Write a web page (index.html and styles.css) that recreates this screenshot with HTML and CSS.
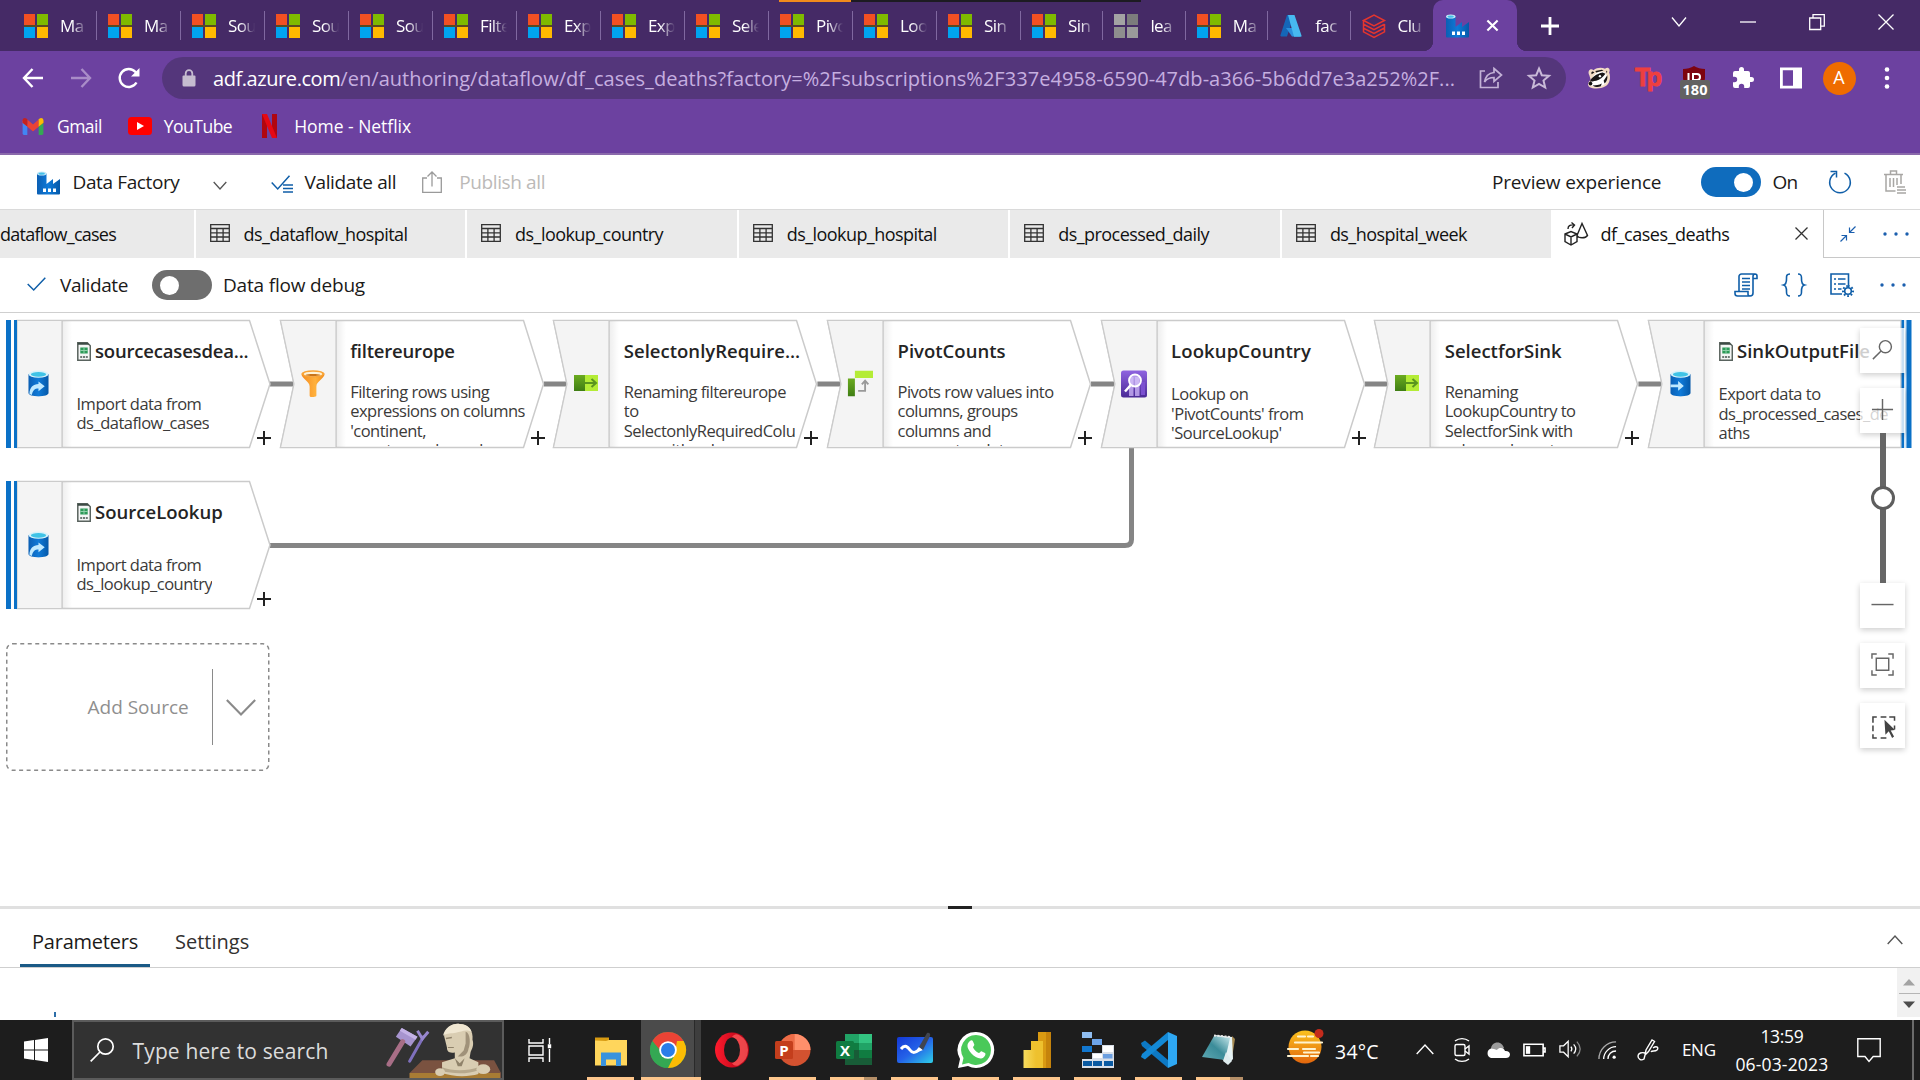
FILE: index.html
```html
<!DOCTYPE html>
<html lang="en">
<head>
<meta charset="utf-8">
<title>df_cases_deaths - Azure Data Factory</title>
<link rel="stylesheet" href="styles.css">
</head>
<body>
<svg class="defs" aria-hidden="true">
  <defs>
    <linearGradient id="gBlue" x1="0" x2="1" y1="0" y2="0"><stop offset="0" stop-color="#0b5fb4"/><stop offset=".5" stop-color="#0f7ad8"/><stop offset="1" stop-color="#0558a8"/></linearGradient>
    <linearGradient id="gFunnel" x1="0" x2="1" y1="0" y2="0"><stop offset="0" stop-color="#f58b1f"/><stop offset=".6" stop-color="#ffb13d"/><stop offset="1" stop-color="#ef8a1c"/></linearGradient>
    <linearGradient id="gGreen" x1="0" x2="0" y1="0" y2="1"><stop offset="0" stop-color="#6bab1f"/><stop offset="1" stop-color="#3f7d14"/></linearGradient>
    <linearGradient id="gPurple" x1="0" x2="0" y1="0" y2="1"><stop offset="0" stop-color="#8f63e0"/><stop offset="1" stop-color="#4a2a96"/></linearGradient>
    <linearGradient id="gBoard" x1="0" x2="1" y1="0" y2="1"><stop offset="0" stop-color="#1338d6"/><stop offset=".5" stop-color="#2462e8"/><stop offset="1" stop-color="#2fd0e8"/></linearGradient>
    <linearGradient id="gOpera" x1="0" x2="1" y1="0" y2="0"><stop offset="0" stop-color="#ff1b2d"/><stop offset="1" stop-color="#a70014"/></linearGradient>
    <linearGradient id="gSun" x1="0" x2="0" y1="0" y2="1"><stop offset="0" stop-color="#fbc21e"/><stop offset="1" stop-color="#e2660d"/></linearGradient>
    <linearGradient id="gBar" x1="0" x2="1" y1="0" y2="0"><stop offset="0" stop-color="#f7dc5e"/><stop offset="1" stop-color="#eec12e"/></linearGradient>
    <linearGradient id="gNote" x1="0" x2="1" y1="1" y2="0"><stop offset="0" stop-color="#5fa9b4"/><stop offset=".5" stop-color="#3b8c99"/><stop offset="1" stop-color="#c9e8ec"/></linearGradient>
    <linearGradient id="gFade" x1="0" x2="1" y1="0" y2="0"><stop offset="0" stop-color="#000" stop-opacity=".07"/><stop offset="1" stop-color="#000" stop-opacity="0"/></linearGradient>

    <symbol id="ms" viewBox="0 0 24 24"><path fill="#5a4a20" d="M0 11h24v2H0z"/><path fill="#f25022" d="M0 0h11v11H0z"/><path fill="#7fba00" d="M13 0h11v11H13z"/><path fill="#00a4ef" d="M0 13h11v11H0z"/><path fill="#ffb900" d="M13 13h11v11H13z"/></symbol>
    <symbol id="ms-grey" viewBox="0 0 24 24"><path fill="#a3a3a3" d="M0 0h11v11H0z"/><path fill="#7c7c7c" d="M13 0h11v11H13z"/><path fill="#8e8e8e" d="M0 13h11v11H0z"/><path fill="#9a9a9a" d="M13 13h11v11H13z"/></symbol>
    <symbol id="factory" viewBox="0 0 24 24"><path fill="url(#gBlue)" d="M1 2.5h9.500V13l6.500-5v5l7-5v14.500a1 1 0 0 1-1 1H2a1 1 0 0 1-1-1z"/><ellipse cx="5.750" cy="2.500" rx="4.750" ry="2" fill="#c8e9f8"/><ellipse cx="5.750" cy="2.700" rx="3.200" ry="1.100" fill="#45bfe8"/><path fill="#fff" d="M7 17.500h3v3.500H7zM12 17.500h3v3.500h-3zM17 17.500h3v3.500h-3z"/></symbol>
    <symbol id="table" viewBox="0 0 20 18"><path fill="none" stroke="#333" stroke-width="1.300" d="M.7.7h18.600v16.600H.7zM.7 4.500h18.600M.7 8.800h18.600M.7 13h18.600M6.900 4.500v12.800M13.100 4.500v12.800"/></symbol>
    <symbol id="csv" viewBox="0 0 14 19"><path fill="#f4f6f5" stroke="#59635e" stroke-width="1.500" d="M.8.8h9.500l3 3v14.400H.8z"/><path fill="#3c4a44" d="M.8.8h9.500l2 2H.8z"/><path fill="#2c9a58" d="M3.300 5.500h7.400v6H3.300z"/><path stroke="#8ed0a8" d="M7 5.500v6M3.300 8.500h7.400"/><path stroke="#6e7a75" stroke-width="2" stroke-dasharray="2 .8" d="M3.200 15h8"/></symbol>
    <symbol id="cyl" viewBox="0 0 22 28"><path fill="url(#gBlue)" d="M.5 4v20c0 2 4.700 3.500 10.500 3.500s10.500-1.500 10.500-3.500V4z"/><ellipse cx="11" cy="4.200" rx="10.500" ry="3.700" fill="#d5f1fa"/><ellipse cx="11" cy="4.400" rx="8" ry="2.400" fill="#3fc3e6"/></symbol>
    <symbol id="i-source" viewBox="0 0 22 28"><use href="#cyl"/><path fill="#bfe9ff" d="M1.500 25c0-7 4-10.500 9.500-10.500V12l6.500 5-6.500 5v-2.800c-4 0-6 2-7 6.800z"/></symbol>
    <symbol id="i-sink" viewBox="0 0 22 28"><use href="#cyl"/><path fill="#bfe9ff" d="M.5 15h8v-3.500l6 5-6 5V18h-8z"/></symbol>
    <symbol id="i-filter" viewBox="0 0 26 28"><path fill="url(#gFunnel)" d="M1 4c0 5 8.500 8 8.500 13v9.500c0 1.200 1 1.500 2 1.500h2c1.800 0 3-.500 3-1.500V17C16.500 12 25 9 25 4z"/><ellipse cx="13" cy="4" rx="12" ry="3.700" fill="#f9a437"/><ellipse cx="13" cy="4.100" rx="9.500" ry="2.400" fill="#fff3d8"/><path fill="#c8741a" d="M5 5.200c3-1.500 13-1.500 16 0-3 1.600-13 1.600-16 0z"/></symbol>
    <symbol id="i-select" viewBox="0 0 26 18"><path fill="#b4ec36" d="M11 1h14v16H11z"/><path fill="url(#gGreen)" d="M1 1h11v16H1z"/><path fill="none" stroke="#5a9420" stroke-width="2" d="M12 9h11M18.500 5l4.500 4-4.500 4"/></symbol>
    <symbol id="i-pivot" viewBox="0 0 28 28"><path fill="#b4ec36" d="M8.500 0H28v8H8.500z"/><path fill="url(#gGreen)" d="M1 8.500h7.500V28H1z"/><path fill="none" stroke="#999" stroke-width="2" d="M12 22h7.500V12M16 15l3.500-4 3.500 4"/></symbol>
    <symbol id="i-lookup" viewBox="0 0 28 28"><rect x="1" y=".5" width="26" height="27" rx="2.500" fill="url(#gPurple)"/><path fill="#c9b1f5" d="M9 7h4.500v19H9zM15 7h4.500v19H15z" opacity=".8"/><path fill="#7b50d0" d="M21 12h4v13h-4z"/><circle cx="15" cy="10.500" r="6" fill="#d9c8fa" fill-opacity=".6" stroke="#fff" stroke-width="1.800"/><path stroke="#fff" stroke-width="2.500" d="M10.800 15 5 21.500"/></symbol>
  </defs>
</svg>

<header class="browser">
  <div class="strip-mark"></div>
  <div class="tabs">
    <div class="tab"><svg><use href="#ms"/></svg><span>Ma</span></div>
    <div class="tab"><svg><use href="#ms"/></svg><span>Ma</span></div>
    <div class="tab"><svg><use href="#ms"/></svg><span>Sou</span></div>
    <div class="tab"><svg><use href="#ms"/></svg><span>Sou</span></div>
    <div class="tab"><svg><use href="#ms"/></svg><span>Sou</span></div>
    <div class="tab"><svg><use href="#ms"/></svg><span>Filte</span></div>
    <div class="tab"><svg><use href="#ms"/></svg><span>Exp</span></div>
    <div class="tab"><svg><use href="#ms"/></svg><span>Exp</span></div>
    <div class="tab"><svg><use href="#ms"/></svg><span>Sele</span></div>
    <div class="tab"><svg><use href="#ms"/></svg><span>Pivo</span></div>
    <div class="tab"><svg><use href="#ms"/></svg><span>Loo</span></div>
    <div class="tab"><svg><use href="#ms"/></svg><span>Sin</span></div>
    <div class="tab tab-s"><svg><use href="#ms"/></svg><span>Sin</span></div>
    <div class="tab tab-s"><svg><use href="#ms-grey"/></svg><span>lea</span></div>
    <div class="tab tab-s"><svg><use href="#ms"/></svg><span>Ma</span></div>
    <div class="tab tab-s"><svg viewBox="0 0 24 24"><path fill="#1566b8" d="M8 1h7L8 22.500H2.500a1 1 0 0 1-1-1.500z"/><path fill="#2b8fdc" d="M7 14h10l4 8.500H13z"/><path fill="#47b9f0" d="M9 1h6.500l7 20.500a1 1 0 0 1-1 1.300H15z"/></svg><span>fac</span></div>
    <div class="tab tab-s tab-last"><svg viewBox="0 0 24 24" fill="none" stroke="#e5352e" stroke-width="1.500"><path d="M1.500 6.500 12 1l10.500 5.500L12 12z"/><path d="M1.500 6.500v3.700L12 15.700l10.500-5.500M1.500 10.200v4L12 19.500l10.500-5.500v-4M1.500 14.200v3.600L12 23.300l10.500-5.500v-4"/></svg><span>Clu</span></div>
    <div class="tab-active"><svg class="i24" viewBox="0 0 24 24"><use href="#factory"/></svg><svg class="i14" viewBox="0 0 14 14"><path stroke="#fff" stroke-width="2.300" d="m1.500 1.500 11 11m0-11-11 11"/></svg></div>
    <svg class="new-tab" viewBox="0 0 18 18"><path stroke="#fff" stroke-width="2.800" d="M9 0v18M0 9h18"/></svg>
    <div class="win">
      <svg viewBox="0 0 16 16"><path d="m1 3.500 7 8.500 7-8.500"/></svg>
      <svg viewBox="0 0 16 16"><path d="M0 8h16"/></svg>
      <svg viewBox="0 0 16 16"><path d="M.7 4h11v11.500h-11zM4 4V.7h11.300v11.500H12"/></svg>
      <svg viewBox="0 0 16 16"><path d="m.5.5 15 15m0-15-15 15"/></svg>
    </div>
  </div>
  <div class="nav">
    <div class="nav-btns">
      <svg viewBox="0 0 22 22" stroke="#fff"><path d="M21 11H2M10.500 2 2 11l8.500 9"/></svg>
      <svg viewBox="0 0 22 22" stroke="#a98cc8"><path d="M1 11h19M11.500 2 20 11l-8.500 9"/></svg>
      <svg viewBox="0 0 22 22" stroke="#fff"><path d="M18.500 15.500A9 9 0 1 1 17.500 5l2 2"/><path fill="#fff" stroke="none" d="M21.500 1v8.500H13z"/></svg>
    </div>
    <div class="url">
      <svg class="lock" viewBox="0 0 14 18"><path fill="#c5bccf" d="M1.500 6.500h11a1 1 0 0 1 1 1V16a1.500 1.500 0 0 1-1.500 1.500H2A1.500 1.500 0 0 1 .5 16V7.500a1 1 0 0 1 1-1z"/><path fill="none" stroke="#c5bccf" stroke-width="1.800" d="M3.700 7V4.500a3.300 3.300 0 0 1 6.600 0V7"/></svg>
      <span class="addr"><b>adf.azure.com</b><i>/en/authoring/dataflow/df_cases_deaths?factory=%2Fsubscriptions%2F337e4958-6590-47db-a366-5b6dd7e3a252%2F...</i></span>
      <svg class="i24" viewBox="0 0 24 24" fill="none" stroke="#c3b2d6" stroke-width="1.700"><path d="M6 5H1.500v16.500H19V16"/><path d="M15 2.500 22.500 9 15 15.500v-4c-4.500 0-7 1-9.500 4.500C6.500 10.500 9.500 7 15 6.500z"/></svg>
      <svg class="i24 star" viewBox="0 0 24 24" fill="none" stroke="#c9bad8" stroke-width="2"><path d="m12 2.500 2.800 6.700 7.200.6-5.500 4.700 1.700 7L12 17.800l-6.200 3.700 1.700-7L2 9.800l7.200-.6z"/></svg>
    </div>
    <div class="ext">
      <svg viewBox="0 0 26 24"><path fill="#f3dcc6" d="M2.500 9C0 4 4 1 7 3.500c4-3 9-3 12.500-1.500 3-3 6.500 0 4.500 4 2 5 1 12-4 15-5 3-13 3-17 1-3-2-2-5 1-8z"/><path fill="#fff" d="M4 17C6 10 9 5 17 5c5 1 6 9 3 13-4 4-11 4-16 2z"/><path fill="#1a1718" d="M3 16c2-5 7-8.500 14-10l3 1.500c-3 4-6 6.500-10 7.500-3 .5-5 1-7 1zM5 8c-1-3 1-4 3-2zM20.500 4l1.500 1-.5 2zM9 4.500 16 3l2 1-8 2zM22 9c.5 4-.5 7-3 9l-1-3zM6 20c4 0 7 0 10-2l-1 3c-3 1-6 1-9-1z"/><circle cx="14" cy="10" r="1.300" fill="#fff"/><circle cx="3.800" cy="18" r="2" fill="#111"/></svg>
      <div class="tp">Tp</div>
      <div class="ub"><svg viewBox="0 0 22 22"><path fill="#7d0410" d="M11 0c3 2 7 3 11 3v9c0 4-4 8-11 10C4 20 0 16 0 12V3c4 0 8-1 11-3z"/><path fill="none" stroke="#fff" stroke-width="2" d="M5.500 7v9M10 16V8h4a3 3 0 0 1 0 6h-3"/></svg><span>180</span></div>
      <svg viewBox="0 0 24 24"><path fill="#fff" d="M20.500 11H19V7a2 2 0 0 0-2-2h-4V3.500a2.500 2.500 0 0 0-5 0V5H4a2 2 0 0 0-2 2v3.800h1.500a2.700 2.700 0 0 1 0 5.400H2V20a2 2 0 0 0 2 2h3.800v-1.500a2.700 2.700 0 0 1 5.400 0V22H17a2 2 0 0 0 2-2v-4h1.500a2.500 2.500 0 0 0 0-5z"/></svg>
      <svg viewBox="0 0 24 24"><path fill="none" stroke="#fff" stroke-width="2.800" d="M2.400 2.900h19.200v18.200H2.400z"/><path fill="#fff" d="M14 3h7v18h-7z"/></svg>
      <div class="avatar">A</div>
      <svg viewBox="0 0 24 24" fill="#fff"><circle cx="12" cy="3.500" r="2.300"/><circle cx="12" cy="12" r="2.300"/><circle cx="12" cy="20.500" r="2.300"/></svg>
    </div>
  </div>
  <div class="marks">
    <svg class="gm" viewBox="0 0 22 18"><path fill="#4285f4" d="M0 3v13.500A1.500 1.500 0 0 0 1.500 18H5V6z"/><path fill="#34a853" d="M22 3v13.500a1.500 1.500 0 0 1-1.500 1.500H17V6z"/><path fill="#ea4335" d="m0 2.500 11 9.500 11-9.500V5l-5 4-6 5-6-5-5-4z"/><path fill="#ea4335" d="M5 1.500V9l6 5 6-5V1.500L11 7z"/><path fill="#c5221f" d="M0 2.500C0 .3 2.500-.6 4 .6l1 1V9L0 5z"/><path fill="#fbbc04" d="M22 2.500C22 .3 19.500-.6 18 .6l-1 1V9l5-4z"/></svg>
    <span>Gmail</span>
    <svg class="yt" viewBox="0 0 24 18"><rect width="24" height="18" rx="3.500" fill="#f00"/><path fill="#fff" d="m9 5 7 4-7 4z"/></svg>
    <span>YouTube</span>
    <svg class="nf" viewBox="0 0 15 24"><path fill="#b1060f" d="M0 0h5v24H0zM10 0h5v24h-5z"/><path fill="#e50914" d="M0 0h5l10 24h-5z"/></svg>
    <span class="m3">Home - Netflix</span>
  </div>
</header>

<main class="adf">
  <div class="topbar">
    <svg class="i24 fac" viewBox="0 0 24 24"><use href="#factory"/></svg>
    <span class="t-df">Data Factory</span>
    <svg class="chev" viewBox="0 0 14 9"><path fill="none" stroke="#555" stroke-width="1.300" d="m.7 1 6.300 7 6.300-7"/></svg>
    <svg class="val" viewBox="0 0 22 18" fill="none" stroke="#0f5ea8" stroke-width="1.500"><path d="m.7 7.500 6 6.500L18.500.7M12 10h10M12 13.500h10M12 17h10"/></svg>
    <span class="t-va">Validate all</span>
    <svg class="pub" viewBox="0 0 20 22" fill="none" stroke="#9a9a9a" stroke-width="1.300"><path d="M5 7H.7v14.300h18.600V7H15M10 15.500V1M5.500 5.500 10 1l4.500 4.500"/></svg>
    <span class="t-pa">Publish all</span>
    <span class="t-pe">Preview experience</span>
    <span class="toggle on"></span>
    <span class="t-on">On</span>
    <svg class="i24 rf" viewBox="0 0 24 24" fill="none" stroke="#0f5ea8" stroke-width="1.500"><path d="M16.500 3.200A10.300 10.300 0 1 1 7.500 3.200"/><path d="M2.500 1.500h6v6"/></svg>
    <svg class="i24 tr" viewBox="0 0 24 24" fill="none" stroke="#a8a6a4" stroke-width="1.500"><path d="M1 4.500h19M7.500 4.500V1h6v3.500M3 4.500V21h9.500M18 4.500V14M7 8v9M10.500 8v9M14 8v7M14 17h8M14 20h9M14 23h9"/></svg>
  </div>
  <div class="doctabs">
    <div class="doc doc-first"><span>dataflow_cases</span></div>
    <div class="doc"><svg><use href="#table"/></svg><span>ds_dataflow_hospital</span></div>
    <div class="doc"><svg><use href="#table"/></svg><span>ds_lookup_country</span></div>
    <div class="doc"><svg><use href="#table"/></svg><span>ds_lookup_hospital</span></div>
    <div class="doc"><svg><use href="#table"/></svg><span>ds_processed_daily</span></div>
    <div class="doc"><svg><use href="#table"/></svg><span>ds_hospital_week</span></div>
    <div class="doc-on">
      <svg class="i24" viewBox="0 0 24 24" fill="none" stroke="#222" stroke-width="1.400"><path d="m1 12 6-2.500 6 2.500v7.500L7 23l-6-3.500zM1 12l6 3 6-3M7 15v8M18 1.500l-5 12c1.500 3 8.500 3 10.500 0zM4 7c0-3 2-4.500 6-4M7.500.500 10.500 3 8 6"/></svg>
      <span>df_cases_deaths</span>
      <svg class="dx" viewBox="0 0 13 13"><path stroke="#333" stroke-width="1.300" d="m.5.5 12 12m0-12-12 12"/></svg>
    </div>
    <div class="doc-tools">
      <svg class="shr" viewBox="0 0 16 16" fill="none" stroke="#1b5fae" stroke-width="1.200"><path d="M15.500.5 9.500 6.500M9.500 1.500v5h5M.5 15.500l6-6M1.500 9.500h5v5"/></svg>
      <svg class="dots" viewBox="0 0 26 4" fill="#1b5fae"><circle cx="2" cy="2" r="1.700"/><circle cx="13" cy="2" r="1.700"/><circle cx="24" cy="2" r="1.700"/></svg>
    </div>
  </div>
  <div class="flowbar">
    <svg class="ck" viewBox="0 0 19 14"><path fill="none" stroke="#0f5ea8" stroke-width="1.500" d="m.7 7 6 6L18.300.7"/></svg>
    <span class="t-vd">Validate</span>
    <span class="toggle off"></span>
    <span class="t-dd">Data flow debug</span>
    <svg class="i24 f1" viewBox="0 0 24 24" fill="none" stroke="#0f5ea8" stroke-width="1.600"><path d="M5 18V3.500A2.500 2.500 0 0 1 7.500 1H21a2 2 0 0 1 2 2v2.500h-4M19 3.500V20a3 3 0 0 1-3 3H3.500A2.500 2.500 0 0 1 1 20.500V18.500h13V20.500a2 2 0 0 0 2 2.500M19 3.500A2.500 2.500 0 0 1 21 1M8 5.500h8M8 9h8M8 12.500h8M8 16h8"/></svg>
    <svg class="i24 f2" viewBox="0 0 24 24" fill="none" stroke="#0f5ea8" stroke-width="1.600"><path d="M8 1C4.500 1 4.500 3 4.500 5s.5 6-3 7c3.500 1 3 5 3 7s0 4 3.500 4M16 1c3.500 0 3.500 2 3.500 4s-.5 6 3 7c-3.500 1-3 5-3 7s0 4-3.500 4"/></svg>
    <svg class="i24 f3" viewBox="0 0 24 24" fill="none" stroke="#0f5ea8" stroke-width="1.600"><path d="M12 21H1V1h17.500v11M4 6h2M8 6h7.500M4 11h2M8 11h7.500M4 16h2M8 16h3.500"/><circle cx="18" cy="18" r="3.300"/><path stroke-dasharray="1.700 1.900" stroke-width="2" d="M18 13a5 5 0 1 1 0 10 5 5 0 0 1 0-10"/></svg>
    <svg class="dots f4" viewBox="0 0 26 4" fill="#1b5fae"><circle cx="2" cy="2" r="1.700"/><circle cx="13" cy="2" r="1.700"/><circle cx="24" cy="2" r="1.700"/></svg>
  </div>

  <section class="canvas">
    <svg class="wires" viewBox="0 0 1920 593" fill="none" stroke="#858585" stroke-width="5"><path d="M270 71h25M543.700 71h25M817.400 71h25M1091 71h25M1364.700 71h25M1638.400 71h25M270 232.500h855q6.500 0 6.500-6V134"/></svg>

    <article class="node src a">
      <svg class="shape" viewBox="0 0 266 128"><path class="body" d="M11 .5h232.500l20.500 63.500-20.500 63.500H11z"/><path class="side" d="M11 .5h45v127H11z"/><path fill="url(#gFade)" d="M56 1h10v126H56z"/><path class="blue" d="M0 0h5v128H0zM8 0h3v128H8z"/></svg>
      <svg class="ico" viewBox="0 0 22 28"><use href="#i-source"/></svg>
      <h3 class="tight"><svg class="csv"><use href="#csv"/></svg><span>sourcecasesdea...</span></h3>
      <p class="p2">Import data from<br>ds_dataflow_cases</p><i class="plus"></i>
    </article>
    <article class="node b">
      <svg class="shape" viewBox="0 0 266 128"><path class="body" d="M.5.500h243l20 63.500-20 63.500H.5L14 64z"/><path class="side" d="M.5.500H56v127H.5L14 64z"/><path fill="url(#gFade)" d="M56 1h10v126H56z"/></svg>
      <svg class="ico w26" viewBox="0 0 26 28"><use href="#i-filter"/></svg>
      <h3 class="tight"><span>filtereurope</span></h3>
      <p>Filtering rows using<br>expressions on columns<br>'continent,<br>country_code, and</p><i class="plus"></i>
    </article>
    <article class="node c">
      <svg class="shape" viewBox="0 0 266 128"><path class="body" d="M.5.500h243l20 63.500-20 63.500H.5L14 64z"/><path class="side" d="M.5.500H56v127H.5L14 64z"/><path fill="url(#gFade)" d="M56 1h10v126H56z"/></svg>
      <svg class="ico w26 h18" viewBox="0 0 26 18"><use href="#i-select"/></svg>
      <h3><span>SelectonlyRequire...</span></h3>
      <p>Renaming filtereurope<br>to<br>SelectonlyRequiredColu<br>mns with columns</p><i class="plus"></i>
    </article>
    <article class="node d">
      <svg class="shape" viewBox="0 0 266 128"><path class="body" d="M.5.500h243l20 63.500-20 63.500H.5L14 64z"/><path class="side" d="M.5.500H56v127H.5L14 64z"/><path fill="url(#gFade)" d="M56 1h10v126H56z"/></svg>
      <svg class="ico w26" viewBox="0 0 28 28"><use href="#i-pivot"/></svg>
      <h3><span>PivotCounts</span></h3>
      <p>Pivots row values into<br>columns, groups<br>columns and<br>aggregates data</p><i class="plus"></i>
    </article>
    <article class="node e">
      <svg class="shape" viewBox="0 0 266 128"><path class="body" d="M.5.500h243l20 63.500-20 63.500H.5L14 64z"/><path class="side" d="M.5.500H56v127H.5L14 64z"/><path fill="url(#gFade)" d="M56 1h10v126H56z"/></svg>
      <svg class="ico w28" viewBox="0 0 28 28"><use href="#i-lookup"/></svg>
      <h3 class="wide"><span>LookupCountry</span></h3>
      <p class="p3">Lookup on<br>'PivotCounts' from<br>'SourceLookup'</p><i class="plus"></i>
    </article>
    <article class="node f">
      <svg class="shape" viewBox="0 0 266 128"><path class="body" d="M.5.500h243l20 63.500-20 63.500H.5L14 64z"/><path class="side" d="M.5.500H56v127H.5L14 64z"/><path fill="url(#gFade)" d="M56 1h10v126H56z"/></svg>
      <svg class="ico w26 h18" viewBox="0 0 26 18"><use href="#i-select"/></svg>
      <h3><span>SelectforSink</span></h3>
      <p>Renaming<br>LookupCountry to<br>SelectforSink with<br>columns 'country</p><i class="plus"></i>
    </article>
    <article class="node g">
      <svg class="shape" viewBox="0 0 266 128"><path class="body" d="M.5.500H253v127H.5L14 64z"/><path class="side" d="M.5.500H56v127H.5L14 64z"/><path fill="url(#gFade)" d="M56 1h10v126H56z"/><path fill="#d3e7f7" d="M256 0h3v128h-3z"/><path class="blue" d="M253.500 0h2.500v128h-2.500zM258.500 0h5v128h-5z"/></svg>
      <svg class="ico" viewBox="0 0 22 28"><use href="#i-sink"/></svg>
      <h3><svg class="csv"><use href="#csv"/></svg><span>SinkOutputFile</span></h3>
      <p class="p3">Export data to<br>ds_processed_cases_de<br>aths</p>
    </article>
    <article class="node src h">
      <svg class="shape" viewBox="0 0 266 128"><path class="body" d="M11 .5h232.500l20.500 63.500-20.500 63.500H11z"/><path class="side" d="M11 .5h45v127H11z"/><path fill="url(#gFade)" d="M56 1h10v126H56z"/><path class="blue" d="M0 0h5v128H0zM8 0h3v128H8z"/></svg>
      <svg class="ico" viewBox="0 0 22 28"><use href="#i-source"/></svg>
      <h3><svg class="csv"><use href="#csv"/></svg><span>SourceLookup</span></h3>
      <p class="p2">Import data from<br>ds_lookup_country</p><i class="plus"></i>
    </article>

    <div class="add">
      <svg class="dash" viewBox="0 0 264 128"><rect x=".75" y=".75" width="262" height="126.500" rx="6" fill="none" stroke="#8a8a8a" stroke-width="1.500" stroke-dasharray="4 3.500"/></svg>
      <span>Add Source</span><i></i>
      <svg class="addc" viewBox="0 0 32 18"><path fill="none" stroke="#8a8a8a" stroke-width="2.200" d="m1 1 15 15.500L31 1"/></svg>
    </div>

    <div class="zoom">
      <div class="zb"><svg viewBox="0 0 24 24"><circle cx="15" cy="8" r="6.300"/><path d="M10.500 12.500 2 21"/></svg></div>
      <div class="zb zplus"><svg viewBox="0 0 24 24"><path d="M12 0v22M1 11h22"/></svg></div>
      <div class="track"><i></i></div>
      <div class="zb"><svg viewBox="0 0 24 24"><path d="M.5 11h23"/></svg></div>
      <div class="zb zgap"><svg viewBox="0 0 24 24"><path d="M5.500 4.500h13v12.500h-13zM1 5V0h5M18 0h5v5M1 17v5h5M18 22h5v-5"/></svg></div>
      <div class="zb zgap"><svg viewBox="0 0 24 24" class="sel"><path d="M1 7V1h4M9 1h6M18 1h5.500v4M1 10v6M1 19v4h4M9 23h6M23.500 10v4"/><path fill="#444" stroke="none" d="m13 4 11 10.500-4.500.5 3.500 6.500-2 1.500-3.500-7L14 19.500z"/></svg></div>
    </div>
  </section>

  <section class="panel">
    <div class="split"><i></i></div>
    <div class="ptabs"><span class="pt on-tab">Parameters</span><span class="pt">Settings</span><svg class="up" viewBox="0 0 16 10"><path fill="none" stroke="#555" stroke-width="1.400" d="m.7 9 7.300-8 7.300 8"/></svg></div>
    <div class="pbody"><i class="sliver"></i>
      <div class="scroll"><svg viewBox="0 0 12 7"><path fill="#a3a3a3" d="M0 6.500 6 0l6 6.500z"/></svg><hr><svg viewBox="0 0 12 7"><path fill="#4c4c4c" d="m0 .5 6 6.500 6-6.500z"/></svg></div>
    </div>
  </section>
</main>

<footer class="task">
  <div class="start"><svg class="i24" viewBox="0 0 24 24"><path fill="#fff" d="m0 3.500 10-1.400v9.500H0zM11 2l13-2v11.500H11zM0 12.600h10V22L0 20.600zM11 12.600h13V24l-13-1.900z"/></svg></div>
  <div class="search">
    <svg class="i24" viewBox="0 0 24 24" fill="none" stroke="#fff" stroke-width="1.700"><circle cx="15.500" cy="8.500" r="7.700"/><path d="M10 14 .7 23.300"/></svg>
    <span>Type here to search</span>
    <svg class="bust" viewBox="0 0 116 57"><path fill="#7a5240" d="M36 39h73l7 13v5H23v-5z"/><path fill="#a87c34" d="M23 52h92v5H23z"/><path fill="#a794cf" d="m15 6 16 9-7 10-15-10z"/><path fill="#c4b2e6" d="m15 6 16 9-2 3-16-9z"/><path stroke="#a86e86" stroke-width="5" stroke-linecap="round" d="m16 20-14 23"/><path stroke="#7f70bd" stroke-width="3" stroke-linecap="round" d="m37 15-14 25"/><path fill="none" stroke="#9887cf" stroke-width="3" d="m31 9 5 8 6-7"/><path fill="#d9cdb2" d="M58 14c2-9 9-13 16-12 9 0 14 7 13 16 2 6-1 10-2 13l-1 6 9 4v12c-10 3-26 3-37-1V41l13-4v-6c-6 1-8-1-8-5l-1-4z"/><path fill="#a0927a" d="M80 10c5 1 5 13 3 17-1 7-6 9-11 8l6-6 2-7z"/><path fill="#f0e7d2" d="M57 14c2-9 10-13 17-12 7 0 11 4 12 8-6-3-10 0-16 1-4 1-9 0-13 3z"/><path fill="#8f826a" d="m60 16 6-1v1.500l-6 1zM62 25.500h6v1h-6zM69 37l5 5 5-5-3 8h-4z"/><path fill="#b6a88c" d="M56 46c10 4 26 4 37 0v3c-9 4-26 4-37 1z"/><ellipse cx="54" cy="51" rx="5" ry="4" fill="#d9cdb2"/><ellipse cx="98" cy="48" rx="7" ry="5" fill="#d9cdb2"/></svg>
  </div>
  <div class="tv"><svg viewBox="0 0 24 24" fill="none" stroke="#fff" stroke-width="1.400"><path d="M1 1v4h14V1M1 8h14v9H1zM1 24v-4h14v4M21.500 0v6M21.500 11v13"/><path fill="#fff" d="M20.500 7h2v2.500h-2z"/></svg></div>
  <div class="apps">
    <div class="app run"><svg viewBox="0 0 36 36"><path fill="#d89b12" d="M2 5.500h14v5H2z"/><path fill="#ffd65c" d="M2 8.500 13 9l3-1h18v25.500H2z"/><path fill="#3a93dd" d="M8 20.500h20V34h-5v-6.500H13V34H8z"/></svg></div>
    <div class="app run chrome"><svg viewBox="0 0 36 36"><circle cx="18" cy="18" r="18" fill="#34a853"/><path fill="#ea4335" d="M2.400 9A18 18 0 0 1 33.600 9L26 18 10 18z"/><path fill="#fbbc05" d="M33.600 9A18 18 0 0 1 18 36l6.500-13L27 9z"/><path fill="#34a853" d="M2.400 9 10 22l8 5-2.500 8.800A18 18 0 0 1 2.400 9z"/><circle cx="18" cy="18" r="8.800" fill="#fff"/><circle cx="18" cy="18" r="7" fill="#2a7de9"/></svg></div>
    <div class="app"><svg viewBox="0 0 36 36"><ellipse cx="18" cy="18" rx="17" ry="17.500" fill="url(#gOpera)"/><path fill="#ff5b5b" d="M25 3a17 17 0 0 1 0 30c-3 2-6 0-7-2 4-1 7-7 7-13s-3-12-7-13c1-2 4-4 7-2z" opacity=".75"/><ellipse cx="18" cy="18" rx="8" ry="12.500" fill="#1d1d1d"/></svg></div>
    <div class="app run"><svg viewBox="0 0 36 36"><circle cx="19.500" cy="18" r="16" fill="#d35230"/><path fill="#ed6c47" d="M19.500 2v16h-16a16 16 0 0 1 16-16z"/><path fill="#ff8f6b" d="M19.500 2a16 16 0 0 1 16 16h-16z"/><rect x="0" y="9" width="18" height="18" rx="1.500" fill="#c43e1c"/><text x="9" y="23.500" class="ltr">P</text></svg></div>
    <div class="app run multi"><svg viewBox="0 0 36 36"><path fill="#21a366" d="M9 2h27v9H9z"/><path fill="#33c481" d="M23 2h13v9H23z"/><path fill="#107c41" d="M9 11h27v7H9z"/><path fill="#21a366" d="M23 11h13v7H23z"/><path fill="#185c37" d="M9 18h27v15H9z"/><path fill="#107c41" d="M23 18h13v8H23z"/><rect x="0" y="9" width="18" height="18" rx="1.500" fill="#107c41"/><text x="9" y="23.500" class="ltr">X</text></svg></div>
    <div class="app run"><svg viewBox="0 0 36 36"><rect x="0" y="5" width="36" height="26" rx="2" fill="url(#gBoard)"/><path fill="none" stroke="#fff" stroke-width="3" d="M4 17c4-5 7-2 9 1s6 4 10-2"/><path fill="#fff" d="m22 15 4 3-5 2z"/><path fill="#41454f" d="M30 1c2-1 4 1 3 3l-7 14-4-3z"/></svg></div>
    <div class="app run"><svg viewBox="0 0 36 36"><path fill="#fff" d="M18 0a18 18 0 1 1-8 34L0 36l2-9A18 18 0 0 1 18 0z"/><path fill="#4ac959" d="M18 3a15 15 0 1 1-7.500 28L4 32.500 5.500 26A15 15 0 0 1 18 3z"/><path fill="#fff" d="M12 9c1-1 2.500-.8 3 .5l1.300 3c.3 1-1.300 2-1.300 2.800 1 2.500 3 4.500 5.800 5.800 1 0 1.800-2 2.700-1.800l3.500 1.700c1.300 1-.5 4.500-3 5.300C18 28 8.500 18 9.500 13c.3-1.700 1.300-3 2.500-4z"/></svg></div>
    <div class="app run"><svg viewBox="0 0 36 36"><path fill="#d99a12" d="M19 0h13v36H19z"/><path fill="#b87409" d="M27 0h5v36h-5z" opacity=".6"/><path fill="#eec12e" d="M12 9h12v27H12z"/><path fill="url(#gBar)" d="M4.500 18H17v18H4.500z"/></svg></div>
    <div class="app run"><svg viewBox="0 0 36 36"><path fill="#8fbdf0" d="M2 0h10v6H2z"/><path fill="#6da5ea" d="M12 7h10v6H12z"/><path fill="#1277cf" d="M2 14h10v6H2z"/><path fill="#d9dfe8" d="M22 13h12v23H2v-9h10v-6h10z"/><path fill="#fff" d="M23 14h10v6H23zM13 22h9v4h-9z"/><path fill="#6c9fe0" d="M23 22h9.500v4.500H23z"/><path fill="#0a5aa2" d="M3 29h9v5H3zM13 29h9v5h-9zM24 29h9v5h-9z"/></svg></div>
    <div class="app run"><svg viewBox="0 0 36 36"><path fill="#0d79c4" d="M0 11 4 8.500l23 19.500v8L1 14z"/><path fill="#1389d6" d="M0 25 4 27.500 27 8V0L1 22z"/><path fill="#2ea7f2" d="m27 0 9 4v28l-9 4z"/></svg></div>
    <div class="app run multi"><svg viewBox="0 0 36 36"><path fill="#a68a52" d="m30 4 3 3-3 19z"/><path fill="#e6f3f5" d="m14 3 16 2 1 22-4 4-9-5z"/><path fill="url(#gNote)" d="M12 4 28 6l-5 22L0 25z"/><path fill="none" stroke="#e8e8e8" stroke-width="2" stroke-dasharray="2 1.500" d="m12 3.500 17 1.500"/><path fill="#dfecee" d="m24 20 6 9-4 4-5-4z"/></svg></div>
  </div>
  <div class="tray">
    <svg class="sun" viewBox="0 0 38 38"><circle cx="19" cy="19" r="16.500" fill="url(#gSun)"/><path stroke="#fff3cf" stroke-width="2.200" stroke-linecap="round" d="M12 8.500h7M22 8.500h5M9 14.500h27M2 21h10M17 21h12M2 28h20M25 28h7M18 24.500h15"/><circle cx="33" cy="5.500" r="4.500" fill="#c42b1c"/></svg>
    <span class="tp34">34°C</span>
    <svg class="t1" viewBox="0 0 18 11"><path d="m.7 10 8.300-9 8.300 9"/></svg>
    <svg class="t2" viewBox="0 0 18 24"><path d="M2 3C6-.2 12-.2 16 3M2 21c4 3.200 10 3.200 14 0"/><rect x="2" y="6.500" width="10" height="11" rx="1.500"/><path d="m12 11 4-3v8l-4-3"/></svg>
    <svg class="t3" viewBox="0 0 24 16"><path fill="#9b9b9b" stroke="none" d="M5 7c0-4 3-6.500 6.500-6.500C15 .500 17 3 18 6l-8 6z"/><path fill="#fff" stroke="none" d="M5 16a5 5 0 0 1 0-9.500c2 0 4 .5 6 1.500 2-3 7-2.500 8 1 3-.3 5 1 5 3.500S22 16 20 16z"/></svg>
    <svg class="t4" viewBox="0 0 24 14"><path stroke-width="1.700" d="M1 1h20v12H1zM21.500 5H23v4h-1.500"/><path fill="#fff" stroke="none" d="M3 3h4.500v8H3z"/></svg>
    <svg class="t5" viewBox="0 0 24 20"><path d="M1 6.500h4l5-5v17l-5-5H1zM13 7.500c1.200 1.500 1.200 3.500 0 5M16 5c2.700 3 2.700 7 0 10"/><path stroke="#888" d="M19.500 2c4.500 5 4.500 11 0 16"/></svg>
    <svg class="t6" viewBox="0 0 20 20"><path stroke="#aaa" d="M1 19C1 9 9 1 19 1"/><path d="M6 19C6 12 12 6 19 6M10.500 19c0-5 3.500-8.500 8.500-8.500"/><circle cx="17" cy="17" r="1.700" fill="#fff" stroke="none"/></svg>
    <svg class="t7" viewBox="0 0 22 22"><path d="m8 16 1-5 6-10 2.500 1.500-6 10L8 16l-1 4c-3 2-6 0-6-3s4-4 7-3M16 9c4-3 6 0 4 2s-5 0-6 2"/></svg>
    <span class="eng">ENG</span>
    <div class="clock"><span>13:59</span><span>06-03-2023</span></div>
    <svg class="t8" viewBox="0 0 24 25"><path d="M.8.800h22.400v17.700h-7L12 23.500l-4-5H.8z"/></svg>
    <i class="peek"></i>
  </div>
</footer>
</body>
</html>
```
FILE: styles.css
```css
* { box-sizing: border-box; }
body { margin: 0; width: 1920px; height: 1080px; overflow: hidden; background: #fff; color: #1b1a19; font: 19px/1.2 "Open Sans", "Noto Sans", sans-serif; display: flex; flex-direction: column; }
svg { display: block; flex: none; overflow: visible; }
span, b, i { white-space: nowrap; flex: none; }
b, i { font-weight: 400; font-style: normal; }
.defs { position: absolute; width: 0; height: 0; }
.i24 { width: 24px; height: 24px; }

/* Browser chrome */
.browser { position: relative; height: 155px; flex: none; background: #6c41a0; border-bottom: 2px solid #8a69ab; }
.strip-mark { position: absolute; left: 779px; top: 0; width: 362px; height: 2px; background: linear-gradient(90deg, #f28a1c 72px, #1d1b22 72px); }
.tabs { height: 51px; background: #452a66; display: flex; align-items: center; padding-left: 13px; color: #fff; font-size: 17px; }
.tab { width: 84px; height: 29px; border-right: 1px solid #8068a0; display: flex; align-items: center; padding-left: 11px; gap: 12px; }
.tab svg { width: 24px; height: 24px; }
.tab span { width: 27px; overflow: hidden; padding-top: 1px; letter-spacing: -.6px; -webkit-mask-image: linear-gradient(90deg, #000 45%, transparent); mask-image: linear-gradient(90deg, #000 45%, transparent); }
.tab-s { width: 82.4px; }
.tab-last { border-right-color: transparent; }
.tab-active { position: relative; width: 84px; height: 51px; background: #6c41a0; border-radius: 10px 10px 0 0; display: flex; align-items: center; padding-left: 12px; gap: 17px; }
.tab-active::before, .tab-active::after { content: ""; position: absolute; bottom: 0; width: 10px; height: 10px; }
.tab-active::before { left: -10px; background: radial-gradient(circle at 0 0, transparent 10px, #6c41a0 10.5px); }
.tab-active::after { right: -10px; background: radial-gradient(circle at 100% 0, transparent 10px, #6c41a0 10.5px); }
.i14 { width: 13px; height: 13px; }
.new-tab { width: 18px; height: 18px; margin-left: 24px; }
.win { margin-left: auto; display: flex; gap: 53px; padding-right: 26px; margin-bottom: 8px; }
.win svg { width: 16px; height: 16px; fill: none; stroke: #fff; stroke-width: 1.3; }
.nav { height: 54px; display: flex; align-items: center; }
.nav-btns { display: flex; gap: 26px; width: 162px; padding-left: 22px; fill: none; stroke-width: 2.4; }
.nav-btns svg { width: 22px; height: 22px; }
.url { width: 1404px; height: 42px; border-radius: 21px; background: #54367b; display: flex; align-items: center; padding: 0 15px 0 20px; }
.lock { width: 14px; height: 18px; margin-right: 17px; }
.addr { font-size: 20px; color: #c6afe0; width: 1242px; margin-right: 24px; padding-top: 1px; }
.addr b { color: #fff; letter-spacing: -.0214em; }
.addr i { letter-spacing: .0019em; }
.star { margin-left: 24px; }
.ext { display: flex; align-items: center; margin-left: 21px; gap: 24px; }
.ext > svg { width: 24px; height: 24px; }
.tp { width: 24px; height: 28px; color: #ee3f3f; font: 700 25px/26px "Liberation Sans", sans-serif; letter-spacing: -3.5px; -webkit-text-stroke: 1px #ee3f3f; }
.ub { position: relative; width: 24px; height: 24px; }
.ub svg { width: 22px; height: 22px; }
.ub span { position: absolute; left: -3px; top: 14px; width: 30px; height: 19px; border-radius: 2px; background: #626262; color: #fff; font: 700 14.5px/20px "Open Sans", sans-serif; text-align: center; }
.avatar { width: 33px; height: 33px; margin: 0 -4.5px; border-radius: 50%; background: #ef6c00; color: #fff; font-size: 18px; display: flex; align-items: center; justify-content: center; }
.marks { height: 42px; display: flex; align-items: center; color: #fff; font-size: 17.5px; padding-left: 22px; letter-spacing: -.03em; }
.m3 { letter-spacing: -.0013em; }
.gm { width: 22px; height: 17px; margin-right: 13px; }
.yt { width: 24px; height: 18px; margin: 0 12px 0 26px; }
.nf { width: 15px; height: 24px; margin: 0 17px 0 30px; }

/* Factory header */
.adf { height: 865px; flex: none; display: flex; flex-direction: column; }
.topbar { height: 55px; border-bottom: 1px solid #dadada; display: flex; align-items: center; padding-left: 36px; flex: none; letter-spacing: -.02em; }
.topbar > span:not(.toggle) { padding-top: 1px; }
.t-df { margin: 0 33px 0 12.5px; }
.fac { margin-top: 2px; }
.chev { width: 14px; height: 9px; margin: 6px 44px 0 0; }
.val { width: 22px; height: 18px; margin-right: 12px; margin-top: 4px; }
.t-va { margin-right: 26px; }
.pub { width: 20px; height: 22px; margin-right: 17px; }
.t-pa { color: #bcbab8; }
.t-pe { margin-left: auto; font-weight: 500; letter-spacing: -.0074em; }
.toggle { width: 60px; height: 30px; border-radius: 15px; position: relative; }
.toggle::after { content: ""; position: absolute; top: 6px; width: 19px; height: 19px; border-radius: 50%; background: #fff; }
.on { background: #0f6cbd; margin: 0 11px 0 40px; }
.on::after { right: 8px; }
.off { background: #6e6e6e; margin: 0 11px 0 24px; }
.off::after { left: 8px; }
.t-on { letter-spacing: -.035em; }
.rf { margin-left: 30px; }
.tr { margin: 0 13px 0 31.5px; }

.doctabs { height: 48px; flex: none; display: flex; background: #fff; font-size: 18px; color: #111; letter-spacing: -.031em; }
.doctabs span { padding-top: 2px; }
.doc { width: 271.6px; background: #eaeaea; border-right: 2px solid #fff; display: flex; align-items: center; padding-left: 14px; gap: 14px; flex: none; }
.doc svg { width: 20px; height: 18px; margin-bottom: 3px; }
.doc-first { width: 195.500px; padding-left: 0; letter-spacing: -.042em; }
.doc-on { width: 270px; display: flex; align-items: center; padding-left: 11px; gap: 12px; font-weight: 500; letter-spacing: -.0255em; flex: none; }
.dx { width: 13px; height: 13px; margin-left: auto; margin-right: 15px; margin-bottom: 2px; }
.doc-tools { flex: 1; border: solid #c8c8c8; border-width: 0 0 1px 1px; display: flex; align-items: center; padding-left: 16px; gap: 27px; }
.shr { width: 16px; height: 16px; }
.dots { width: 26px; height: 4px; }

.flowbar { height: 55px; flex: none; border-bottom: 1px solid #cfcfcf; display: flex; align-items: center; padding-left: 27px; }
.flowbar > span:not(.toggle) { padding-top: 1px; }
.ck { width: 19px; height: 14px; margin: 0 14px 3px 0; }
.t-vd { letter-spacing: -.0205em; }
.t-dd { letter-spacing: -.0098em; }
.f1 { margin-left: auto; }
.f2 { margin: 0 24px; }
.f4 { margin: 0 14px 0 26px; }

/* Data flow canvas */
.canvas { position: relative; height: 593px; flex: none; }
.wires { position: absolute; inset: 0; width: 1920px; height: 593px; }
.node { position: absolute; top: 7px; width: 264px; height: 128px; overflow: visible; }
.a, .h { left: 6px; }
.b { left: 279.700px; }
.c { left: 553.300px; }
.d { left: 827px; }
.e { left: 1100.600px; }
.f { left: 1374.200px; }
.g { left: 1648px; }
.h { top: 168px; }
.shape { position: absolute; left: 0; top: 0; width: 266px; height: 128px; }
.body { fill: #fff; stroke: #cbcbcb; stroke-width: 1.5; }
.side { fill: #f4f4f4; stroke: #cbcbcb; stroke-width: 1.2; }
.blue { fill: #0b71c7; }
.ico { position: absolute; left: 22px; top: 50px; width: 21px; height: 27px; }
.w26 { left: 20px; width: 26px; }
.w28 { left: 19px; width: 28px; height: 28px; }
.h18 { top: 54px; height: 18px; }
.node h3 { position: absolute; left: 70.5px; top: 18px; margin: 0; font-size: 18.5px; line-height: 26px; font-weight: 600; letter-spacing: .001em; color: #242424; display: flex; align-items: center; }
.node .tight { letter-spacing: -.01em; }
.node .wide { letter-spacing: .007em; }
.csv { width: 14px; height: 19px; margin-right: 4.5px; }
.node p { position: absolute; left: 70.5px; top: 61.5px; height: 64.5px; overflow: hidden; margin: 0; font-size: 16.5px; line-height: 19.6px; letter-spacing: -.0305em; color: #3b3a39; white-space: nowrap; }
.node .p2 { top: 73.500px; height: 50px; }
.node .p3 { top: 64px; height: 61px; }
.plus { position: absolute; left: 251px; top: 111px; width: 14px; height: 14px; background: linear-gradient(#222, #222) 50% 50% / 14px 2px no-repeat, linear-gradient(#222, #222) 50% 50% / 2px 14px no-repeat; }
.add { position: absolute; left: 6px; top: 330px; width: 264px; height: 128px; display: flex; align-items: center; padding-left: 81.5px; color: #8f8f8f; font-size: 19px; }
.dash { position: absolute; left: 0; top: 0; width: 264px; height: 128px; }
.add i { width: 1.5px; height: 76px; background: #8a8a8a; margin: 0 12px 0 23px; }
.addc { width: 32px; height: 17px; }
.zoom { position: absolute; left: 1860px; top: 15px; width: 45px; display: flex; flex-direction: column; align-items: center; }
.zb { width: 45px; height: 45px; background: rgba(255, 255, 255, .78); box-shadow: 0 2px 6px rgba(0, 0, 0, .2); display: flex; align-items: center; justify-content: center; flex: none; }
.zb svg { width: 23px; height: 23px; fill: none; stroke: #666; stroke-width: 1.5; }
.zb .sel { stroke: #444; stroke-width: 1.6; margin: 3px 0 0 2px; }
.zplus, .zgap { margin-top: 15px; }
.track { position: relative; width: 6px; height: 150px; background: #666; flex: none; }
.track i { position: absolute; left: -9px; top: 53px; width: 24px; height: 24px; border: 3px solid #5e5e5e; border-radius: 50%; background: #fff; }

/* Bottom panel */
.panel { height: 114px; flex: none; }
.split { height: 3px; background: #e0e0e0; display: flex; justify-content: center; }
.split i { width: 24px; background: #222; }
.ptabs { height: 59px; border-bottom: 1px solid #cfcfcf; display: flex; align-items: stretch; padding: 0 17px 0 20px; font-size: 20px; color: #323130; }
.pt { display: flex; align-items: center; padding: 8px 12px 0; }
.on-tab { border-bottom: 3px solid #1a5a86; font-weight: 500; letter-spacing: -.0112em; color: #1b1a19; margin-right: 13px; padding-top: 11px; }
.up { width: 16px; height: 10px; margin: 26px 0 0 auto; }
.pbody { height: 49px; display: flex; align-items: flex-end; padding-left: 54px; }
.sliver { width: 1.5px; height: 5px; background: #2d6ea8; }
.scroll { margin-left: auto; width: 23px; height: 49px; background: #f1f1f1; display: flex; flex-direction: column; align-items: center; justify-content: space-between; padding: 11px 0 9px; }
.scroll svg { width: 12px; height: 7px; }
.scroll hr { width: 21px; height: 1px; margin: 0 0 0 2px; border: 0; background: #b5b5b5; }

/* Windows taskbar */
.task { height: 60px; flex: none; background: #1d1d1d; color: #fff; display: flex; }
.start { width: 72px; display: flex; align-items: center; padding-left: 24px; }
.search { width: 432px; border: 2px solid #5b5b5b; background: #323232; display: flex; align-items: center; padding-left: 16px; font-size: 21px; letter-spacing: .0069em; color: #dcdcdc; overflow: hidden; }
.search .i24 { margin-right: 18.5px; }
.search span { padding-top: 4px; }
.bust { width: 116px; height: 56px; margin-left: auto; }
.tv { width: 80px; display: flex; align-items: center; padding-left: 24px; }
.tv svg { width: 24px; height: 24px; }
.apps { display: flex; gap: 14px; padding-left: 3px; width: 684px; }
.app { width: 47px; display: flex; justify-content: center; align-items: center; position: relative; }
.app svg { width: 36px; height: 36px; }
.run { border-bottom: 3px solid #fdc68c; padding-top: 3px; }
.chrome { width: 60px; margin: 0 -7px 0 -7px; background: linear-gradient(90deg, #4b4b4b 53px, #2a2a2a 53px, #2a2a2a 54px, #3e3e3e 54px); padding-right: 7px; }
.multi::after { content: ""; position: absolute; right: 0; bottom: -3px; width: 13px; height: 3px; background: #b58f68; }
.ltr { fill: #fff; font: 700 15px "Open Sans", sans-serif; text-anchor: middle; }
.tray { flex: 1; position: relative; display: flex; align-items: center; fill: none; stroke: #fff; stroke-width: 1.4; padding-left: 18px; }
.tray svg { fill: none; }
.sun { width: 38px; height: 38px; stroke: none; margin: -6px 11px 0 0; }
.tp34 { font-size: 19.5px; letter-spacing: .012em; margin-right: 37px; margin-top: 3px; }
.t1 { width: 18px; height: 11px; margin-right: 19px; margin-top: -2px; }
.t2 { width: 18px; height: 24px; margin-right: 15px; }
.t3 { width: 24px; height: 16px; margin-right: 13px; }
.t4 { width: 23px; height: 14px; margin-right: 13px; }
.t5 { width: 22px; height: 20px; margin-right: 17px; margin-top: -2px; }
.t6 { width: 19px; height: 19px; margin-right: 20px; }
.t7 { width: 22px; height: 22px; margin-right: 23px; }
.eng { font-size: 17px; letter-spacing: -.012em; margin-right: 19.500px; margin-top: 1px; }
.clock { width: 93px; font-size: 17.5px; line-height: 28px; display: flex; flex-direction: column; align-items: center; margin-right: 29px; }
.clock span:first-child { letter-spacing: -.0186em; }
.clock span:last-child { letter-spacing: .0096em; }
.t8 { width: 24px; height: 25px; margin-top: 0; }
.peek { position: absolute; right: 6px; top: 0; width: 2px; height: 60px; background: #6a6a6a; }
```
